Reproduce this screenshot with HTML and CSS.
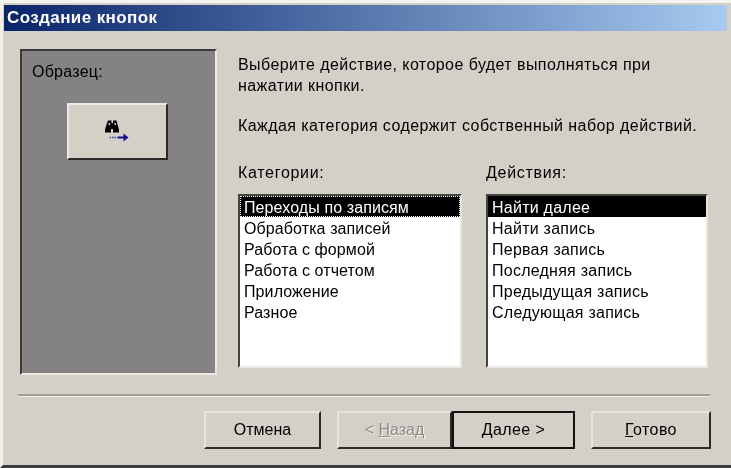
FILE: index.html
```html
<!DOCTYPE html>
<html lang="ru">
<head>
    <meta charset="UTF-8" />
    <title>Создание кнопок</title>
    <link rel="stylesheet" href="styles.css">
</head>
<body>

    <section class="window">
        <div class="titlebar">Создание кнопок</div>

        <div class="content">
            <div class="sample">
                <div class="sample-label">Образец:</div>
                <div class="sample-button">
                    <svg width="26" height="24" viewBox="0 0 26 24">
                        <path d="M3 .5h3.500v2.500h1.500v-2.500h3.500l1 4 1.500 5v3h-6v-3.500h-2v3.500h-6v-3l1.500-5z" fill="#000"/>
                        <path d="M3.500 3h1.500v2h-1.500zM9.500 3h1.500v2h-1.500z" fill="#d4d0c8"/>
                        <path d="M4.500 17.500h8.500" stroke="#3a35a8" stroke-width="1.500" stroke-dasharray="1.500 1" fill="none"/>
                        <path d="M13 17.500h6" stroke="#14108a" stroke-width="2" fill="none"/>
                        <path d="M18.500 13.500l5 4-5 4z" fill="#14108a"/>
                    </svg>
                </div>
            </div>

            <div class="main">
                <p class="intro">Выберите действие, которое будет выполняться при<br />нажатии кнопки.</p>
                <p class="intro intro-second">Каждая категория содержит собственный набор действий.</p>

                <div class="lists">
                    <div class="list-col">
                        <div class="list-label">Категории:</div>
                        <ul class="listbox">
                            <li class="selected focused">Переходы по записям</li>
                            <li>Обработка записей</li>
                            <li>Работа с формой</li>
                            <li>Работа с отчетом</li>
                            <li>Приложение</li>
                            <li>Разное</li>
                        </ul>
                    </div>
                    <div class="list-col">
                        <div class="list-label">Действия:</div>
                        <ul class="listbox">
                            <li class="selected">Найти далее</li>
                            <li>Найти запись</li>
                            <li>Первая запись</li>
                            <li>Последняя запись</li>
                            <li>Предыдущая запись</li>
                            <li>Следующая запись</li>
                        </ul>
                    </div>
                </div>
            </div>
        </div>

        <div class="divider"></div>

        <div class="buttons">
            <button class="btn btn-cancel">Отмена</button>
            <div class="btn-pair">
                <button class="btn btn-back" disabled>&lt; <u>Н</u>азад</button>
                <button class="btn btn-next"><u>Д</u>алее &gt;</button>
            </div>
            <button class="btn btn-finish"><u>Г</u>отово</button>
        </div>
    </section>

</body>
</html>
```

FILE: styles.css
```css
html,
body {
    padding: 0;
    margin: 0;
    height: 100%;
    overflow: hidden;
    background: #d4d0c8;
}
.window {
    box-sizing: border-box;
    width: 731px;
    height: 468px;
    border-top: 3px solid #f4f3ef;
    border-left: 3px solid #f0efea;
    border-bottom: 3px solid #3f3f3f;
    background: #d4d0c8;
    color: #000;
    font-family: "Liberation Sans", Arial, sans-serif;
    font-size: 16px;
    filter: blur(0.4px);
}
.titlebar {
    height: 26px;
    margin: 2px 4px 0 1px;
    padding-left: 3px;
    line-height: 26px;
    color: #fff;
    font-size: 17px;
    font-weight: bold;
    letter-spacing: 0.4px;
    background: linear-gradient(to right, #0a246a, #a6caf0);
}
.content {
    display: flex;
    margin: 18px 0 0 17px;
}
.sample {
    box-sizing: border-box;
    width: 197px;
    height: 326px;
    padding: 11px 0 0 10px;
    border: 2px solid;
    border-color: #3a3a3a #eceae5 #eceae5 #3a3a3a;
    background: #858284;
}
.sample-label {
    line-height: 20px;
    letter-spacing: 0.25px;
}
.sample-button {
    box-sizing: border-box;
    display: flex;
    align-items: center;
    justify-content: center;
    width: 101px;
    height: 57px;
    margin: 21px 0 0 35px;
    border: 2px solid;
    border-color: #eceae5 #2a2a2a #2a2a2a #eceae5;
    background: #d4d0c8;
}
.main {
    margin-left: 21px;
}
.intro {
    margin: 5px 0 0 0;
    line-height: 21px;
    letter-spacing: 0.43px;
}
.intro-second {
    margin-top: 19px;
}
.lists {
    display: flex;
    gap: 24px;
    margin-top: 27px;
}
.list-col {
    width: 224px;
}
.list-col + .list-col {
    width: 222px;
}
.list-col + .list-col li {
    letter-spacing: 0.25px;
}
.list-label {
    line-height: 20px;
    margin-bottom: 11px;
    letter-spacing: 0.7px;
}
.listbox {
    box-sizing: border-box;
    height: 174px;
    margin: 0;
    padding: 0;
    list-style: none;
    border: 2px solid;
    border-color: #444 #e8e6e0 #eceae5 #444;
    background: #fff;
}
.listbox li {
    box-sizing: border-box;
    height: 21px;
    padding: 1px 0 0 4px;
    line-height: 22px;
    letter-spacing: 0.1px;
}
.listbox .selected {
    background: #000;
    color: #fff;
}
.listbox .focused {
    outline: 1px dotted #fff;
    outline-offset: -1px;
}
.divider {
    margin: 19px 21px 0 15px;
    border-top: 2px solid #a09e9a;
    border-bottom: 1px solid #eceae5;
}
.buttons {
    display: flex;
    align-items: stretch;
    justify-content: flex-end;
    gap: 16px;
    height: 38px;
    margin: 14px 20px 0 0;
}
.btn-pair {
    display: flex;
}
.btn {
    box-sizing: border-box;
    height: 38px;
    padding: 0;
    border: 2px solid;
    border-color: #e6e4de #2a2a2a #2a2a2a #e6e4de;
    background: #d4d0c8;
    color: #000;
    font-family: inherit;
    font-size: 16px;
}
.btn-cancel {
    width: 117px;
}
.btn-back {
    width: 115px;
    color: #8b8a86;
    text-shadow: 1px 1px 0 #f4f3ef;
}
.btn-next {
    width: 123px;
    border-color: #111;
    letter-spacing: 0.4px;
}
.btn-finish {
    width: 120px;
    letter-spacing: 0.4px;
}
```
